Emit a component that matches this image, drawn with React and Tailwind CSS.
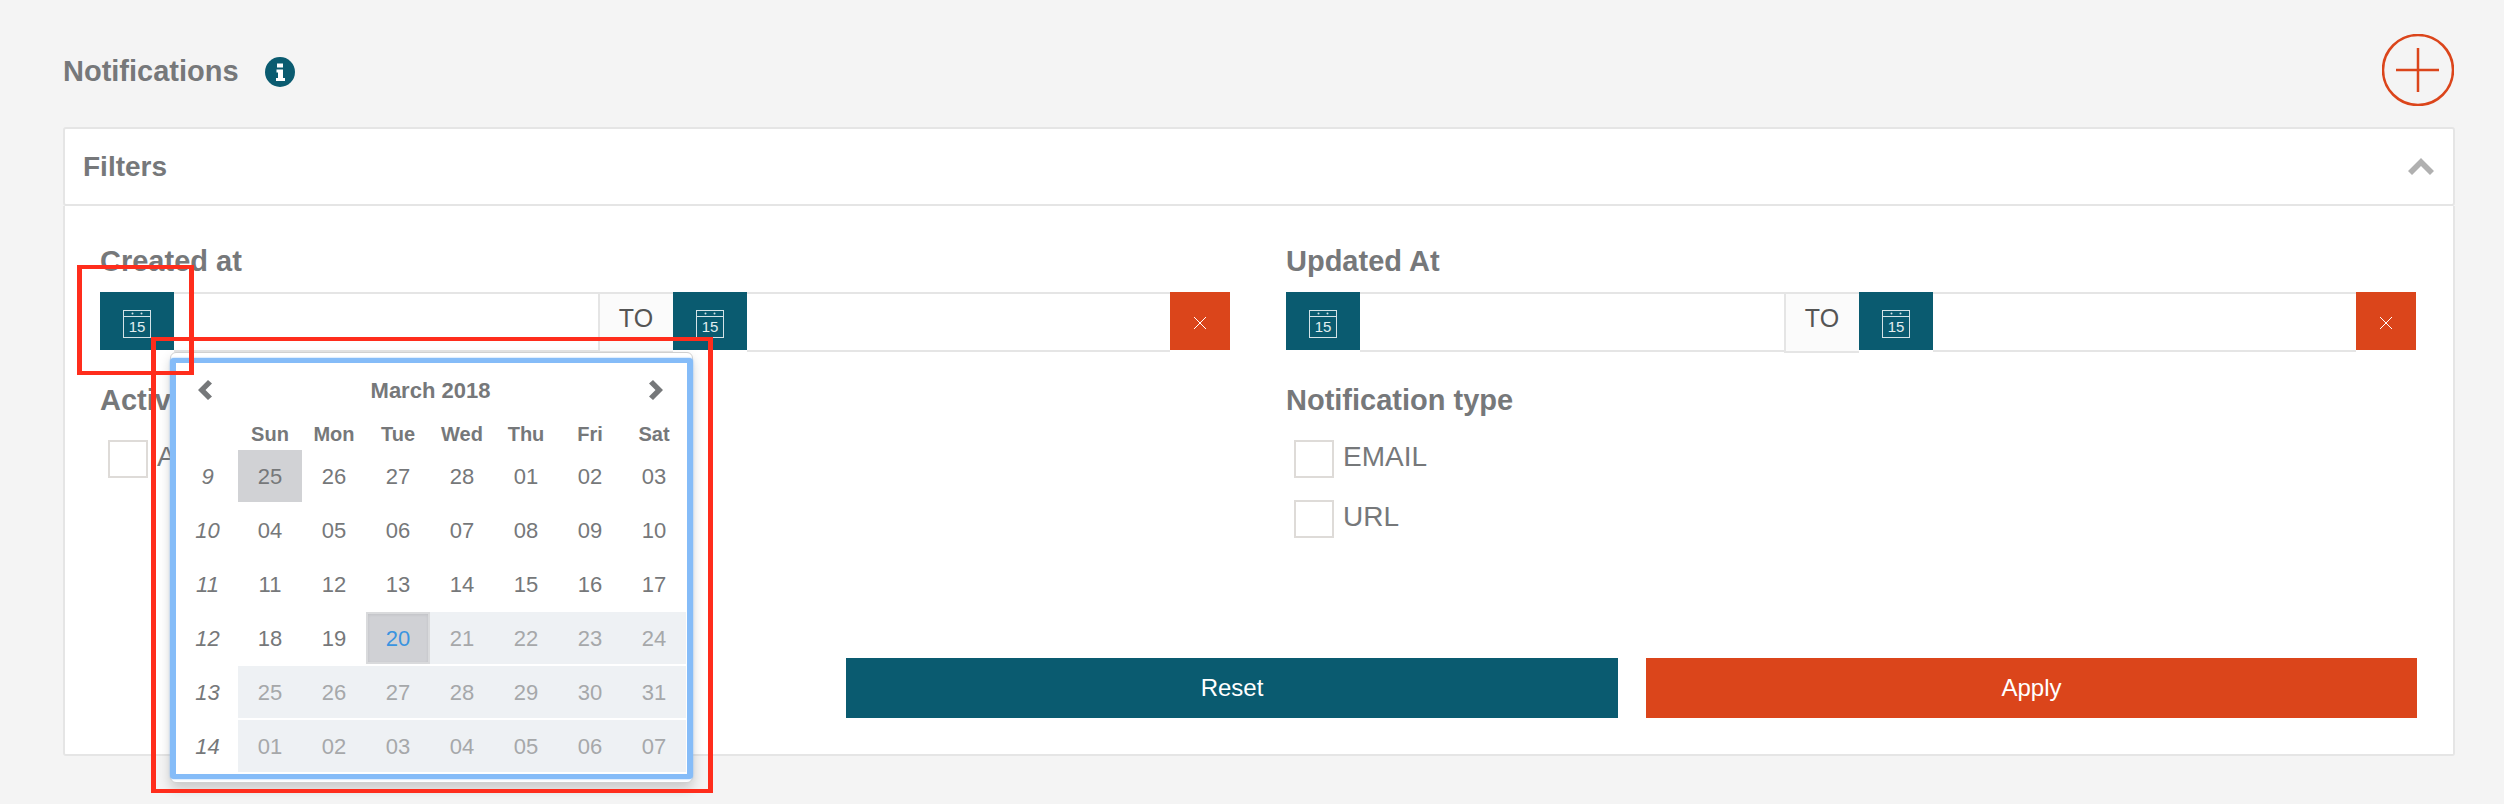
import React from 'react';

const weeks = [
  { num: 9, days: ['25', '26', '27', '28', '01', '02', '03'] },
  { num: 10, days: ['04', '05', '06', '07', '08', '09', '10'] },
  { num: 11, days: ['11', '12', '13', '14', '15', '16', '17'] },
  { num: 12, days: ['18', '19', '20', '21', '22', '23', '24'] },
  { num: 13, days: ['25', '26', '27', '28', '29', '30', '31'] },
  { num: 14, days: ['01', '02', '03', '04', '05', '06', '07'] },
];

const dayNames = ['Sun', 'Mon', 'Tue', 'Wed', 'Thu', 'Fri', 'Sat'];

const CalendarIcon = () => (
  <svg width="28" height="28" viewBox="0 0 28 28" fill="none" className="mt-[6px]">
    <rect x="0.5" y="0.5" width="27" height="27" stroke="#d5e3e7" strokeWidth="1" />
    <line x1="0" y1="6.5" x2="28" y2="6.5" stroke="#d5e3e7" strokeWidth="1" />
    <circle cx="9.5" cy="3.5" r="1" fill="#d5e3e7" />
    <circle cx="18.5" cy="3.5" r="1" fill="#d5e3e7" />
    <text x="14" y="22" textAnchor="middle" fontSize="15" fill="#e3eef0" fontFamily="Liberation Sans, sans-serif">15</text>
  </svg>
);

const CalendarButton = () => (
  <div className="w-[74px] h-[58px] shrink-0 bg-[#0a5b70] flex items-center justify-center">
    <CalendarIcon />
  </div>
);

const DateRange = () => (
  <div className="flex items-start">
    <CalendarButton />
    <input className="flex-1 min-w-0 h-[60px] bg-white border-y-2 border-[#e5e5e5] outline-none" />
    <div className="w-[75px] h-[61px] shrink-0 bg-[#fbfbfb] border-l-2 border-y-2 border-[#e5e5e5] text-[25px] text-[#555] flex items-center justify-center pb-[7px]">
      TO
    </div>
    <CalendarButton />
    <input className="flex-1 min-w-0 h-[60px] bg-white border-y-2 border-[#e5e5e5] outline-none" />
    <button className="w-[60px] h-[58px] shrink-0 bg-[#db451b] flex items-center justify-center pt-[4px]">
      <svg width="14" height="14" viewBox="0 0 14 14" stroke="#fff" strokeWidth="1">
        <path d="M1 1l12 12M13 1L1 13" />
      </svg>
    </button>
  </div>
);

const Checkbox = ({ label }) => (
  <label className="flex items-center h-[38px] pl-[8px] text-[28px] text-[#76787a]">
    <span className="w-[40px] h-[38px] bg-white border-2 border-[#dedbd8] mr-[9px]"></span>
    <span className="-mt-[4px]">{label}</span>
  </label>
);

const DatePopup = () => (
  <div className="absolute left-[70px] top-[60px] w-[523px] h-[431px] bg-white rounded-md border border-[#d0d0d0] pt-[5px] pb-[1px] shadow-[0_6px_12px_rgba(0,0,0,0.175)] z-10">
    <div className="border-x-[6px] border-y-[5px] border-[#85bcf8] rounded-[4px] bg-white -mx-px shadow-[0_0_2px_#85bcf8]">
      <div className="h-[54px] flex items-center justify-between pl-[22px] pr-[24px] text-[22px] font-bold text-[#76787a]">
        <svg width="14" height="20" viewBox="0 0 14 20" fill="#76787a">
          <path d="M10 0l4 3.5-6.5 6.5L14 16.500 10 20 0 10z" />
        </svg>
        <span>March 2018</span>
        <svg width="14" height="20" viewBox="0 0 14 20" fill="#76787a">
          <path d="M4 0L0 3.500 6.500 10 0 16.500 4 20l10-10z" />
        </svg>
      </div>
      <div className="grid grid-cols-[62px_repeat(7,64px)] h-[33px] items-center text-[20px] font-bold text-[#76787a] text-center">
        <span></span>
        {dayNames.map(name => (
          <span key={name}>{name}</span>
        ))}
      </div>
      {weeks.map((week, w) => (
        <div key={week.num} className="grid grid-cols-[62px_repeat(7,64px)] h-[52px] mb-[2px] items-center text-[22px] text-center text-[#76787a]">
          <span className="italic pl-[1px]">{week.num}</span>
          {week.days.map((day, d) => {
            const idx = w * 7 + d;
            let cls = 'text-[#76787a]';
            if (idx === 0) cls = 'bg-[#d1d2d5] text-[#76787a]';
            if (idx === 23) cls = 'bg-[#d0d1d5] text-[#3a94e0] border-2 border-[#d9dadc] shadow-[inset_0_1px_3px_rgba(0,0,0,0.08)]';
            if (idx > 23) cls = 'bg-[#eef1f4] text-[#a6a8aa]';
            return (
              <span key={idx} className={`h-[52px] flex items-center justify-center ${cls}`}>{day}</span>
            );
          })}
        </div>
      ))}
    </div>
  </div>
);

const App = () => {
  return (
    <div className="relative w-full min-h-[804px] bg-[#f4f4f4] overflow-hidden pl-[63px] pr-[49px] font-['Liberation_Sans',sans-serif]">
      {/* Header */}
      <div className="h-[127px] flex items-start justify-between">
        <div className="flex items-center mt-[55px] h-[34px]">
          <h1 className="text-[29px] font-bold text-[#76787a]">Notifications</h1>
          <svg width="30" height="30" viewBox="0 0 30 30" className="ml-[26px]">
            <circle cx="15" cy="15" r="15" fill="#0a5b70" />
            <path d="M12 6.500h6v4h-6zM11.500 12.500h6.500v8.500h2v3H11v-3h2v-5.500h-1.500z" fill="#fff" />
          </svg>
        </div>
        <button className="mt-[34px] mr-[1px]">
          <svg width="72" height="72" viewBox="0 0 72 72" fill="none" stroke="#db451b" className="block">
            <circle cx="36" cy="36" r="35" strokeWidth="2.500" />
            <path d="M36 14v44M14 36h43" strokeWidth="2.500" />
          </svg>
        </button>
      </div>

      {/* Filters header */}
      <div className="h-[79px] bg-white border-2 border-[#e5e5e5] rounded-[3px] flex items-center justify-between pl-[18px] pr-[19px]">
        <h2 className="text-[28px] font-bold text-[#76787a]">Filters</h2>
        <svg width="26" height="18" viewBox="0 0 26 18" fill="#b0b0b0">
          <path d="M13 0l13 13-4 4-9-9-9 9-4-4z" />
        </svg>
      </div>

      {/* Filters body */}
      <div className="h-[550px] bg-white border-x-2 border-b-2 border-[#e5e5e5] rounded-b-[3px] pl-[35px] pr-[37px] pt-[38px]">
        <div className="grid grid-cols-2 gap-x-[56px]">
          <div>
            <h3 className="h-[34px] leading-[34px] mb-[14px] text-[29px] font-bold text-[#76787a]">Created at</h3>
            <div className="relative">
              <DateRange />
              <DatePopup />
            </div>
            <h3 className="h-[34px] leading-[34px] mt-[30px] mb-[23px] text-[29px] font-bold text-[#76787a]">Active</h3>
            <Checkbox label="Active" />
          </div>
          <div>
            <h3 className="h-[34px] leading-[34px] mb-[14px] text-[29px] font-bold text-[#76787a]">Updated At</h3>
            <DateRange />
            <h3 className="h-[34px] leading-[34px] mt-[30px] mb-[23px] text-[29px] font-bold text-[#76787a]">Notification type</h3>
            <div className="flex flex-col gap-[22px]">
              <Checkbox label="EMAIL" />
              <Checkbox label="URL" />
            </div>
          </div>
        </div>
        <div className="flex justify-end gap-[28px] mt-[120px] -mr-[1px]">
          <button className="w-[772px] h-[60px] bg-[#0a5b70] text-white text-[24px]">Reset</button>
          <button className="w-[771px] h-[60px] bg-[#db451b] text-white text-[24px]">Apply</button>
        </div>
      </div>

      {/* Red annotation boxes */}
      <div className="absolute left-[77px] top-[265px] w-[117px] h-[110px] border-x-[5px] border-y-[4px] border-[#ff2d1c] z-20"></div>
      <div className="absolute left-[151px] top-[337px] w-[562px] h-[456px] border-x-[5px] border-y-[4px] border-[#ff2d1c] z-20"></div>
    </div>
  );
};

export default App;
